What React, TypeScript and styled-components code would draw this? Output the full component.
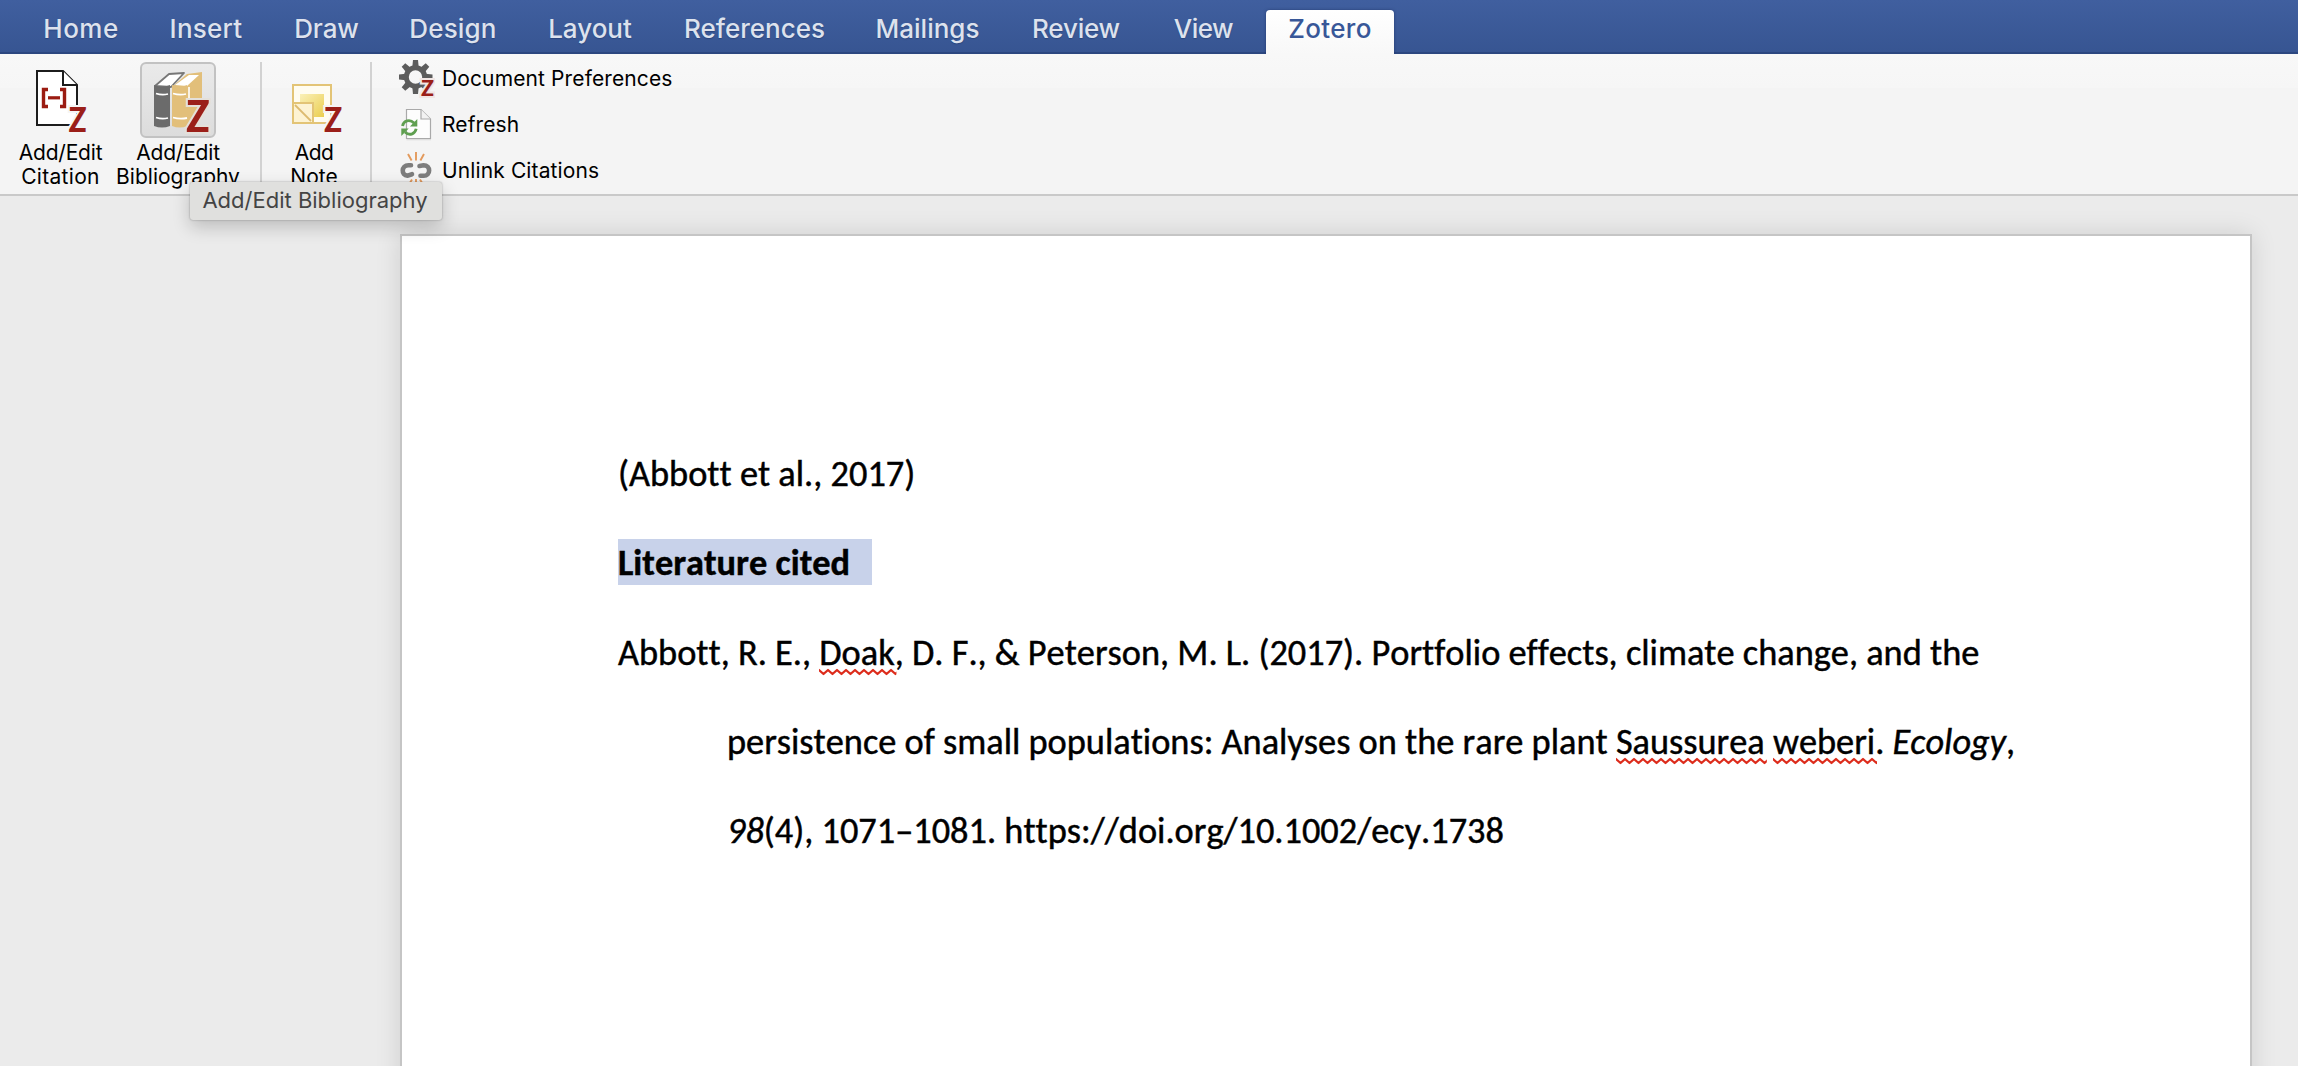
import React from 'react';
import styled, { createGlobalStyle } from 'styled-components';

const GlobalStyle = createGlobalStyle`
  html, body { margin: 0; padding: 0; overflow: hidden; background: #ebebeb; }
  * { box-sizing: border-box; }
`;

const UI_FONT = 'Inter, "Liberation Sans", sans-serif';

const Window = styled.div`
  position: relative;
  display: flex;
  flex-direction: column;
  width: 2298px;
  height: 1066px;
  overflow: hidden;
  background: #ebebeb;
  font-family: ${UI_FONT};
`;

const TabBar = styled.nav`
  display: flex;
  flex: none;
  align-items: flex-end;
  height: 54px;
  padding-left: 18px;
  background: linear-gradient(#405f9f, #375592 52px, #2c4780 52px);
`;

const Tab = styled.div<{ $width: number; $spacing: number; $active?: boolean }>`
  width: ${p => p.$width}px;
  height: 44px;
  margin-left: ${p => (p.$active ? 6 : 0)}px;
  border-radius: 4px 4px 0 0;
  text-align: center;
  white-space: nowrap;
  font-size: 26px;
  font-weight: 500;
  line-height: 38px;
  letter-spacing: ${p => p.$spacing}px;
  color: ${p => (p.$active ? '#385798' : '#dde2ed')};
  background: ${p => (p.$active ? 'linear-gradient(#ffffff, #f8f8f8)' : 'transparent')};
  box-shadow: ${p => (p.$active ? '0 0 3px rgba(20, 35, 80, 0.55)' : 'none')};
  text-shadow: ${p => (p.$active ? 'none' : '0 1px 1px rgba(20, 40, 90, 0.4)')};
`;

const Ribbon = styled.div`
  position: relative;
  display: flex;
  flex: none;
  height: 142px;
  border-bottom: 2px solid #c9c9c9;
  background: linear-gradient(#f8f8f8, #f6f6f6 34px, #f4f4f4 34px);
`;

const BigButton = styled.div<{ $width: number; $after?: number }>`
  display: flex;
  flex-direction: column;
  align-items: center;
  width: ${p => p.$width}px;
  margin-right: ${p => p.$after ?? 0}px;
  padding-top: 8px;
`;

const IconFrame = styled.div<{ $hover?: boolean }>`
  width: 76px;
  height: 76px;
  margin-bottom: 3px;
  border-radius: 6px;
  border: 2px solid ${p => (p.$hover ? '#c2c2c2' : 'transparent')};
  background: ${p => (p.$hover ? 'linear-gradient(#eaeaea, #dcdcdc)' : 'transparent')};
  svg { display: block; margin: -2px; }
`;

const Caption = styled.div<{ $spacing: number }>`
  font-size: 21px;
  line-height: 24px;
  white-space: nowrap;
  letter-spacing: ${p => p.$spacing}px;
  color: #000;
`;

const Separator = styled.div`
  width: 2px;
  height: 125px;
  margin-top: 8px;
  background: #d2d2d2;
`;

const CommandList = styled.div`
  display: flex;
  flex-direction: column;
  padding: 2px 0 0 27px;
`;

const Command = styled.div`
  display: flex;
  align-items: center;
  height: 46px;
  gap: 7px;
  font-size: 21px;
  line-height: 46px;
  letter-spacing: 0.12px;
  white-space: nowrap;
  color: #000;
`;

const Tooltip = styled.div`
  position: absolute;
  z-index: 3;
  left: 190px;
  top: 182px;
  width: 252px;
  height: 38px;
  padding-right: 2px;
  border-radius: 3px;
  background: #e0e0de;
  box-shadow: 0 0 2px rgba(0, 0, 0, 0.35), 0 7px 18px rgba(0, 0, 0, 0.2);
  font-size: 22px;
  line-height: 36px;
  text-align: center;
  white-space: nowrap;
  color: #444;
`;

const Canvas = styled.main`
  display: flex;
  flex: 1;
  min-height: 0;
  padding: 38px 46px 0 400px;
  overflow: hidden;
`;

const Page = styled.article`
  flex: 1;
  height: 900px;
  padding: 193.4px 0 0 216px;
  border: 2px solid #c5c5c5;
  background: #fff;
  box-shadow: 0 0 24px rgba(0, 0, 0, 0.12);
  font-family: Carlito, Calibri, sans-serif;
  font-size: 36.35px;
  font-kerning: none;
  font-variant-ligatures: none;
  color: #000;
  -webkit-text-stroke: 0.45px #000;
`;

const Line = styled.p<{ $indent?: boolean }>`
  margin: 0;
  padding-left: ${p => (p.$indent ? 109 : 0)}px;
  line-height: 89.1px;
  white-space: pre;
`;

const Selected = styled.strong`
  padding: 1px 22px 0 0;
  background: #c8d2ea;
`;

const Misspelt = styled.span`
  position: relative;
  display: inline-block;
  line-height: 44px;
`;

const Wave = styled.svg`
  position: absolute;
  left: 0;
  top: 37px;
  width: calc(100% + 2px);
  height: 8px;
`;

function Flagged({ children }: { children: string }) {
  return (
    <Misspelt>
      {children}
      <Wave>
        <defs>
          <pattern id="wave" width="9" height="8" patternUnits="userSpaceOnUse">
            <path d="M-4.5 6 L0 2 L4.5 6 L9 2 L13.5 6" fill="none" stroke="#dd2c1c" strokeWidth="2.3" strokeLinejoin="round" />
          </pattern>
        </defs>
        <rect width="100%" height="8" fill="url(#wave)" />
      </Wave>
    </Misspelt>
  );
}

function Zed({ x, y, size, halo = '#f5f5f5', width }: { x: number; y: number; size: number; halo?: string; width: number }) {
  return (
    <text
      x={x} y={y} fontFamily="Carlito, Calibri, sans-serif" fontWeight="700" fontSize={size}
      textLength={width} lengthAdjust="spacingAndGlyphs"
      fill="#9b1f19" stroke={halo} strokeWidth="4" paintOrder="stroke"
    >Z</text>
  );
}

const CitationIcon = () => (
  <svg width="76" height="76" viewBox="23 62 76 76">
    <path d="M37 71 H63 L77 85 V125 H37 Z" fill="#fff" stroke="#1c1c1c" strokeWidth="2" />
    <path d="M63 71 V85 H77" fill="#fff" stroke="#1c1c1c" strokeWidth="2" />
    <path d="M48 89.5 H43.5 V106.5 H48 M60 89.5 H64.5 V106.5 H60" fill="none" stroke="#9b1c12" strokeWidth="3.4" />
    <path d="M48 97.8 H60" stroke="#9b1c12" strokeWidth="3.2" />
    <Zed x={68.5} y={132} size={37.5} width={18} />
  </svg>
);

const BooksIcon = () => (
  <svg width="76" height="76" viewBox="140 62 76 76">
    <path d="M155 86 L169 74 L184 73 L171 87 Z" fill="#fff" stroke="#777" strokeWidth="1.8" strokeLinejoin="round" />
    <path d="M154 85 Q162 88 170 85 V126 Q162 129 154 126 Z" fill="#6b6b6b" />
    <path d="M156 93.5 Q162 95.5 168 94 M156 117.5 Q162 119.5 168 118" fill="none" stroke="#fff" strokeWidth="1.8" />
    <path d="M172 87 L187 74 L202 72 V116 L187 125 Z" fill="#e2bf7a" />
    <path d="M175 85 L189 75 L199 75 L187 86 Z" fill="#fff" />
    <path d="M172 85 Q180 88 187 85 V126 Q180 129 172 126 Z" fill="#e2bf7a" />
    <path d="M173 93.5 Q180 95.5 186 94 M173 117.5 Q180 119.5 187 118" fill="none" stroke="#fff" strokeWidth="1.8" />
    <path d="M189 87 V102" stroke="#fff" strokeWidth="1.6" />
    <Zed x={186} y={132} size={48} width={23.5} halo="#e4e0da" />
  </svg>
);

const NoteIcon = () => (
  <svg width="76" height="76" viewBox="276 62 76 76">
    <defs>
      <linearGradient id="note" x1="0" y1="0" x2="1" y2="1">
        <stop offset="0" stopColor="#faf0b8" />
        <stop offset="1" stopColor="#ebce50" />
      </linearGradient>
    </defs>
    <rect x="293" y="85" width="38" height="38" fill="#fffcf0" stroke="#e3c476" strokeWidth="2" />
    <rect x="300" y="94" width="24" height="23" fill="url(#note)" />
    <rect x="293" y="103" width="20" height="20" fill="#fdf3d3" stroke="#e3c476" strokeWidth="2" />
    <path d="M295 105 L311 121" stroke="#dcbb70" strokeWidth="1.8" />
    <Zed x={324} y={132} size={37.5} width={18} />
  </svg>
);

const TEETH = [0, 45, 90, 135, 180, 225, 270, 315];

const GearIcon = () => (
  <svg width="36" height="46" viewBox="399 56 36 46">
    <circle cx="415.5" cy="77" r="9.2" fill="none" stroke="#5c5c5c" strokeWidth="5" />
    {TEETH.map(a => (
      <path key={a} d="M412.3 67 L413 60 H418 L418.7 67 Z" fill="#5c5c5c" transform={`rotate(${a} 415.5 77)`} />
    ))}
    <Zed x={421} y={96} size={24.5} width={13} halo="#f1e6e4" />
  </svg>
);

const RefreshIcon = () => (
  <svg width="36" height="46" viewBox="398 102 36 46">
    <path d="M405.5 139.6 H430" stroke="#dedede" strokeWidth="1.4" />
    <path d="M405.5 109.5 H420 L429.5 119 V138.5 H405.5 Z" fill="#fdfdfd" stroke="#a9a9a9" strokeWidth="1.2" />
    <path d="M420 109.5 V119 H429.5" fill="#f2f2f2" stroke="#a9a9a9" strokeWidth="1.2" />
    <g fill="none" stroke="#5f9f50" strokeWidth="2.8">
      <path d="M401.5 126 C402.5 120.5 409 119 413 123" />
      <path d="M415.2 128.8 C414 134.5 408 136 404 132" />
    </g>
    <path d="M416.3 119 V126.4 H408.9 Z M400.3 136 V128.6 H407.7 Z" fill="#5f9f50" />
  </svg>
);

const UnlinkIcon = () => (
  <svg width="36" height="46" viewBox="398 148 36 46">
    <g fill="none" stroke="#7d7d7d" strokeWidth="4.6" strokeLinecap="round">
      <path d="M410 165.2 H407.5 C400 165.2 400 175.8 406.5 175.6 L411 174.2" />
      <path d="M418.5 166 L422.5 165.2 C430 165.2 430 176 422.5 175.8 H419.5" />
    </g>
    <path d="M415 152 V160.5 M407 154 L410.6 160.5 M423 154 L419.4 160.5 M415 179 V187 M411 179.5 L407 186 M419 179.5 L423 186" stroke="#e39a5c" strokeWidth="1.9" />
  </svg>
);

const tabs = [
  { label: 'Home', width: 126, spacing: 0.46 },
  { label: 'Insert', width: 124, spacing: 0.24 },
  { label: 'Draw', width: 117, spacing: -0.1 },
  { label: 'Design', width: 136, spacing: 0.16 },
  { label: 'Layout', width: 138, spacing: 0 },
  { label: 'References', width: 191, spacing: 0 },
  { label: 'Mailings', width: 155, spacing: 0 },
  { label: 'Review', width: 142, spacing: -0.2 },
  { label: 'View', width: 113, spacing: -0.5 },
  { label: 'Zotero', width: 128, spacing: 0.3, active: true },
];

export default function App() {
  return (
    <Window>
      <GlobalStyle />
      <TabBar>
        {tabs.map(t => (
          <Tab key={t.label} $width={t.width} $spacing={t.spacing} $active={t.active}>{t.label}</Tab>
        ))}
      </TabBar>
      <Ribbon>
        <BigButton $width={121}>
          <IconFrame><CitationIcon /></IconFrame>
          <Caption $spacing={-0.2}>Add/Edit</Caption>
          <Caption $spacing={0.3}>Citation</Caption>
        </BigButton>
        <BigButton $width={114} $after={25}>
          <IconFrame $hover><BooksIcon /></IconFrame>
          <Caption $spacing={-0.2}>Add/Edit</Caption>
          <Caption $spacing={0}>Bibliography</Caption>
        </BigButton>
        <Separator />
        <BigButton $width={104} $after={4}>
          <IconFrame><NoteIcon /></IconFrame>
          <Caption $spacing={-0.6}>Add</Caption>
          <Caption $spacing={0}>Note</Caption>
        </BigButton>
        <Separator />
        <CommandList>
          <Command><GearIcon />Document Preferences</Command>
          <Command><RefreshIcon />Refresh</Command>
          <Command><UnlinkIcon />Unlink Citations</Command>
        </CommandList>
      </Ribbon>
      <Tooltip>Add/Edit Bibliography</Tooltip>
      <Canvas>
        <Page>
          <Line>(Abbott et al., 2017)</Line>
          <Line><Selected>Literature cited</Selected></Line>
          <Line>Abbott, R. E., <Flagged>Doak</Flagged>, D. F., &amp; Peterson, M. L. (2017). Portfolio effects, climate change, and the</Line>
          <Line $indent>persistence of small populations: Analyses on the rare plant <Flagged>Saussurea</Flagged> <Flagged>weberi</Flagged>. <em>Ecology</em>,</Line>
          <Line $indent><em>98</em>(4), 1071–1081. https://doi.org/10.1002/ecy.1738</Line>
        </Page>
      </Canvas>
    </Window>
  );
}
